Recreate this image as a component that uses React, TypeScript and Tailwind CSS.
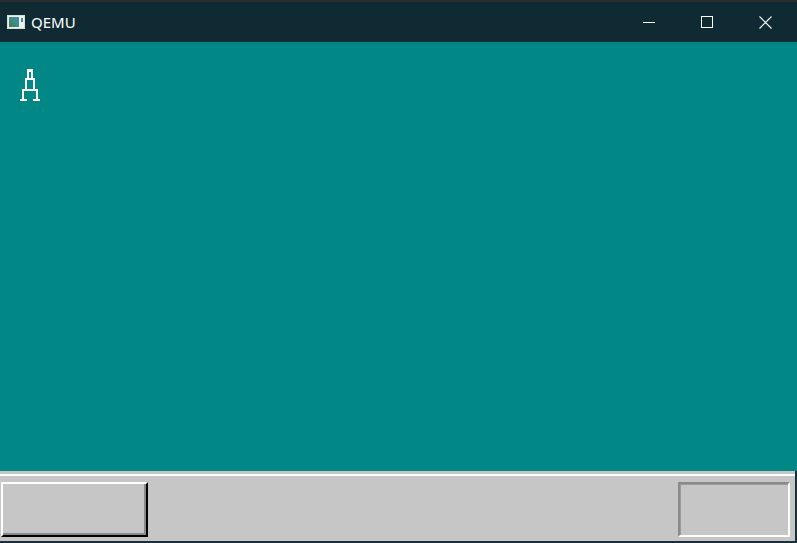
import React from "react";

function AppIcon() {
  return (
    <svg width="18" height="14" viewBox="0 0 18 14" shapeRendering="crispEdges">
      <rect x="0" y="0" width="18" height="14" fill="#d8dcdc" />
      <rect x="1" y="1" width="16" height="12" fill="#eef0f0" />
      <defs>
        <linearGradient id="g" x1="0" y1="1" x2="1" y2="0">
          <stop offset="0" stopColor="#3b7a4a" />
          <stop offset="0.5" stopColor="#3f8f84" />
          <stop offset="1" stopColor="#4a86b8" />
        </linearGradient>
      </defs>
      <rect x="2" y="2" width="10" height="10" fill="url(#g)" />
      <rect x="14" y="3" width="2" height="4" fill="#3f8f84" />
    </svg>
  );
}

function Figure() {
  return (
    <svg width="24" height="36" viewBox="0 0 24 36" shapeRendering="crispEdges" fill="#ffffff">
      {/* top rect */}
      <rect x="8" y="0" width="6" height="3" />
      <rect x="8" y="0" width="2" height="11" />
      <rect x="12" y="0" width="2" height="11" />
      {/* middle rect */}
      <rect x="6" y="9" width="10" height="2" />
      <rect x="6" y="9" width="2" height="13" />
      <rect x="14" y="9" width="2" height="13" />
      {/* horizontal bar */}
      <rect x="3" y="20" width="16" height="2" />
      {/* legs */}
      <rect x="3" y="20" width="2" height="12" />
      <rect x="17" y="20" width="2" height="12" />
      {/* feet */}
      <rect x="1" y="30" width="7" height="2" />
      <rect x="14" y="30" width="7" height="2" />
    </svg>
  );
}

export default function App() {
  return (
    <div
      className="w-[797px] h-[543px] flex flex-col overflow-hidden bg-[#0f2a33]"
      style={{ fontFamily: '"Segoe UI", "Noto Sans", "Open Sans", sans-serif' }}
    >
      <div className="h-[2px] bg-[#2b2d2e]" />
      <div className="h-[40px] flex items-center bg-[#0f2a33]">
        <div className="pl-[7px] flex items-center">
          <AppIcon />
        </div>
        <span className="ml-[6px] text-[15px] text-white leading-none">QEMU</span>
        <div className="ml-auto flex h-full pr-[3px]">
          <div className="w-[58px] h-full flex items-center justify-center">
            <div className="w-[12px] h-[1px] bg-white" />
          </div>
          <div className="w-[58px] h-full flex items-center justify-center">
            <div className="w-[12px] h-[12px] border border-white" />
          </div>
          <div className="w-[58px] h-full flex items-center justify-center">
            <svg width="13" height="13" viewBox="0 0 13 13">
              <path d="M0.5 0.5 L12.5 12.5 M12.5 0.5 L0.5 12.5" stroke="#ffffff" strokeWidth="1.1" />
            </svg>
          </div>
        </div>
      </div>
      <div className="flex-1 bg-[#018786] pl-[19px] pt-[27px]">
        <Figure />
      </div>
      <div className="h-[70px] bg-[#c6c6c6] pt-[3px] border-r-[2px] border-r-[#17303a]">
        <div className="h-[2px] bg-white" />
        <div className="flex justify-between pl-[1px] pr-[5px] pt-[6px]">
          <div className="w-[147px] h-[55px] border-2 border-t-white border-l-white border-b-black border-r-black bg-[#c6c6c6] shadow-[inset_-2px_-2px_0_#8a8a8a]" />
          <div className="w-[112px] h-[55px] border-2 border-t-[#8a8a8a] border-l-[#8a8a8a] border-b-white border-r-white bg-[#c6c6c6] shadow-[inset_1px_1px_0_#9a9a9a]" />
        </div>
      </div>
      <div className="h-[2px] bg-[#17303a]" />
    </div>
  );
}
